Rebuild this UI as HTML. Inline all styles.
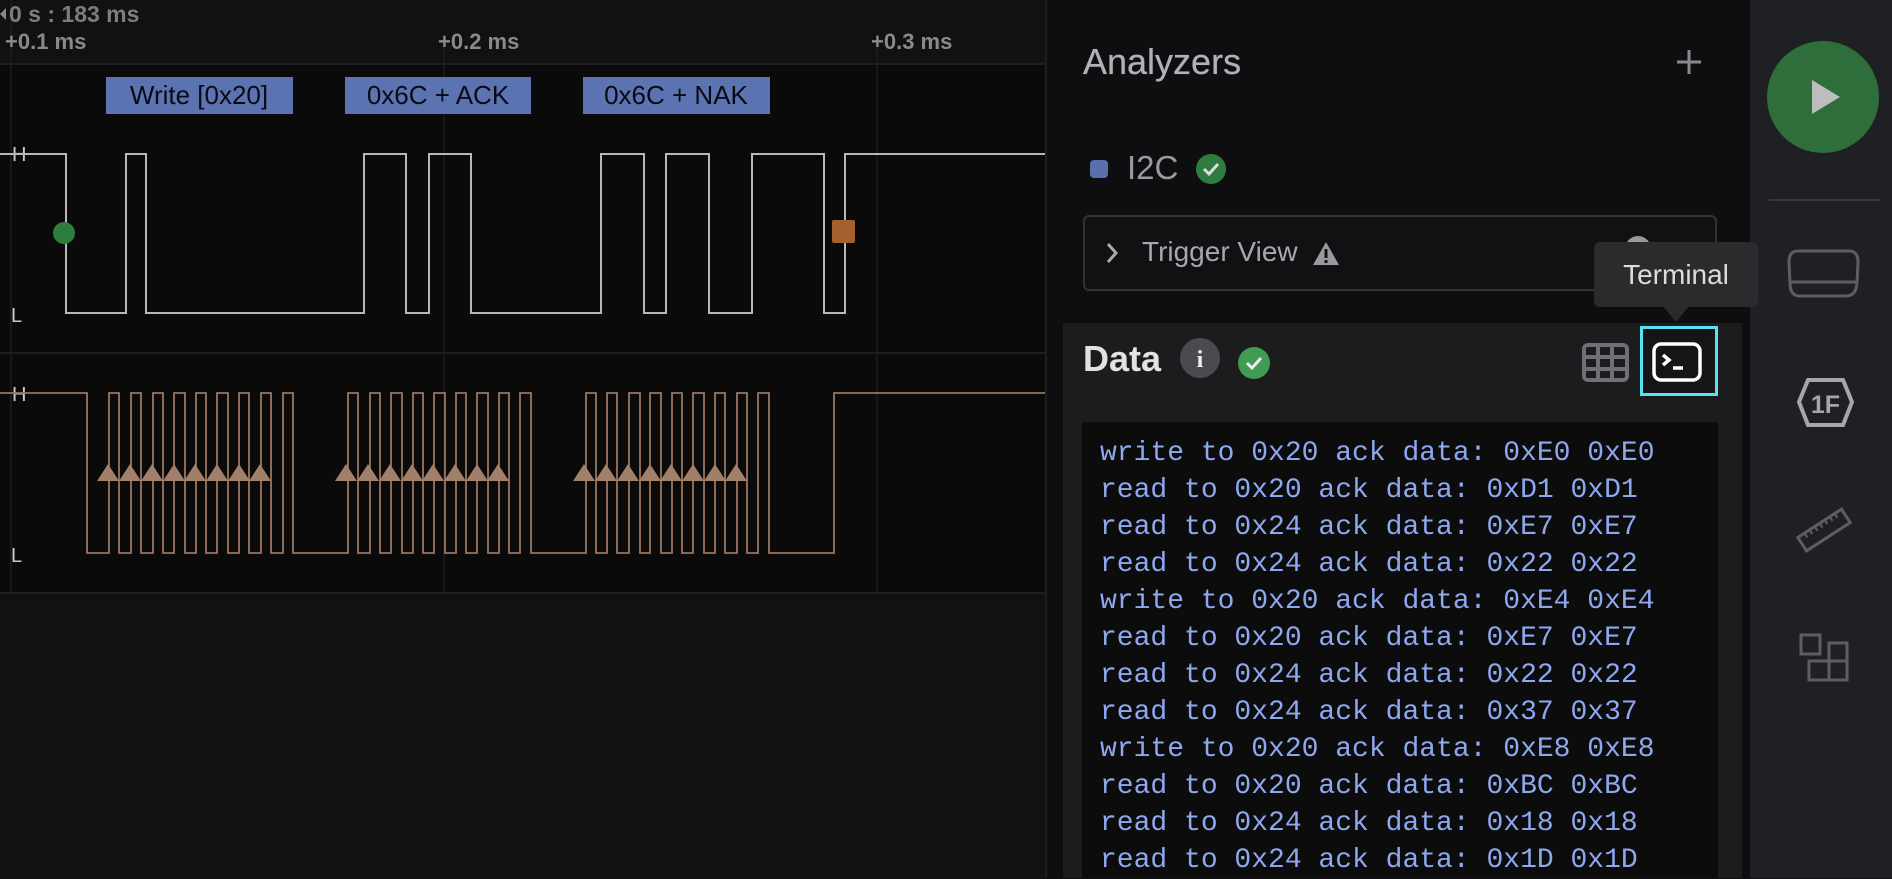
<!DOCTYPE html>
<html><head><meta charset="utf-8"><style>
*{margin:0;padding:0;box-sizing:border-box}
body{width:1892px;height:878px;overflow:hidden;background:#0f0f10;font-family:"Liberation Sans",sans-serif;position:relative}
.abs{position:absolute}
.term div{white-space:pre;height:37px;line-height:37px}
</style></head><body>
<div class="abs" style="left:0;top:0;width:1045px;height:878px;background:#111112"></div>
<div class="abs" style="left:0;top:64px;width:1045px;height:529px;background:#0a0a0a"></div>
<svg class="abs" style="left:0;top:0" width="1045" height="878" viewBox="0 0 1045 878">
 <line x1="11" y1="0" x2="11" y2="593" stroke="#1d1d1f" stroke-width="1.5"/>
 <line x1="444" y1="40" x2="444" y2="593" stroke="#1d1d1f" stroke-width="1.5"/>
 <line x1="877" y1="40" x2="877" y2="593" stroke="#1d1d1f" stroke-width="1.5"/>
 <line x1="0" y1="64" x2="1045" y2="64" stroke="#1e1e20" stroke-width="2"/>
 <line x1="0" y1="353" x2="1045" y2="353" stroke="#1e1e20" stroke-width="2"/>
 <line x1="0" y1="593" x2="1045" y2="593" stroke="#1e1e20" stroke-width="2"/>
 <path d="M0 14 L6 8 L6 20Z" fill="#888"/>
 <text x="9" y="22" font-family="Liberation Sans" font-size="23" font-weight="bold" fill="#7d7d80">0 s : 183 ms</text>
 <text x="5" y="49" font-family="Liberation Sans" font-size="22" font-weight="bold" fill="#8a8a8d">+0.1 ms</text>
 <text x="438" y="49" font-family="Liberation Sans" font-size="22" font-weight="bold" fill="#8a8a8d">+0.2 ms</text>
 <text x="871" y="49" font-family="Liberation Sans" font-size="22" font-weight="bold" fill="#8a8a8d">+0.3 ms</text>
 <rect x="106" y="77" width="187" height="37" fill="#5b73b0"/>
 <rect x="345" y="77" width="186" height="37" fill="#5b73b0"/>
 <rect x="583" y="77" width="187" height="37" fill="#5b73b0"/>
 <text x="199" y="104" text-anchor="middle" font-family="Liberation Sans" font-size="26" fill="#0a0a14">Write [0x20]</text>
 <text x="438" y="104" text-anchor="middle" font-family="Liberation Sans" font-size="26" fill="#0a0a14">0x6C + ACK</text>
 <text x="676" y="104" text-anchor="middle" font-family="Liberation Sans" font-size="26" fill="#0a0a14">0x6C + NAK</text>
 <text x="12" y="161" font-family="Liberation Sans" font-size="20" fill="#ccc">H</text>
 <text x="11" y="322" font-family="Liberation Sans" font-size="20" fill="#ccc">L</text>
 <text x="12" y="401" font-family="Liberation Sans" font-size="20" fill="#ccc">H</text>
 <text x="11" y="562" font-family="Liberation Sans" font-size="20" fill="#ccc">L</text>
 <path d="M0 154 H66 V313 H126 V154 H146 V313 H364 V154 H406 V313 H429 V154 H471 V313 H601 V154 H644 V313 H666 V154 H709 V313 H752 V154 H824 V313 H845 V154 H1045" fill="none" stroke="#b8b8b8" stroke-width="2"/>
 <circle cx="64" cy="233" r="11" fill="#2e7d3e"/>
 <rect x="832" y="220" width="23" height="23" rx="2" fill="#a6602f"/>
 <path d="M0 393 H87 V553 H109 V393 H119 V553 H131 V393 H141 V553 H153 V393 H163 V553 H174 V393 H185 V553 H196 V393 H206 V553 H217 V393 H228 V553 H239 V393 H249 V553 H261 V393 H271 V553 H283 V393 H293 V553 H348 V393 H358 V553 H370 V393 H380 V553 H391 V393 H402 V553 H413 V393 H423 V553 H434 V393 H445 V553 H456 V393 H466 V553 H477 V393 H488 V553 H499 V393 H509 V553 H520 V393 H531 V553 H586 V393 H596 V553 H607 V393 H617 V553 H629 V393 H640 V553 H650 V393 H661 V553 H672 V393 H682 V553 H693 V393 H704 V553 H715 V393 H725 V553 H737 V393 H747 V553 H758 V393 H769 V553 H834 V393 H1045" fill="none" stroke="#9a7660" stroke-width="1.8"/>
 <g fill="#a17f68">
  <path d="M97 481 l11 -17 l11 17Z M119 481 l11 -17 l11 17Z M141 481 l11 -17 l11 17Z M163 481 l11 -17 l11 17Z M184 481 l11 -17 l11 17Z M206 481 l11 -17 l11 17Z M228 481 l11 -17 l11 17Z M249 481 l11 -17 l11 17Z"/>
  <path d="M335 481 l11 -17 l11 17Z M357 481 l11 -17 l11 17Z M379 481 l11 -17 l11 17Z M401 481 l11 -17 l11 17Z M422 481 l11 -17 l11 17Z M444 481 l11 -17 l11 17Z M466 481 l11 -17 l11 17Z M487 481 l11 -17 l11 17Z"/>
  <path d="M573 481 l11 -17 l11 17Z M595 481 l11 -17 l11 17Z M617 481 l11 -17 l11 17Z M639 481 l11 -17 l11 17Z M660 481 l11 -17 l11 17Z M682 481 l11 -17 l11 17Z M704 481 l11 -17 l11 17Z M725 481 l11 -17 l11 17Z"/>
 </g>
</svg>
<div class="abs" style="left:1045px;top:0;width:2px;height:878px;background:#1e1e20"></div>
<div class="abs" style="left:1047px;top:0;width:703px;height:878px;background:#0e0e10"></div>
<div class="abs" style="left:1083px;top:41px;font-size:36px;color:#b2b2b6;text-shadow:0 0 0.6px #b2b2b6">Analyzers</div>
<svg class="abs" style="left:1675px;top:48px" width="28" height="28"><path d="M14 2V26M2 14H26" stroke="#8a8a8e" stroke-width="3"/></svg>
<div class="abs" style="left:1090px;top:160px;width:18px;height:18px;border-radius:4px;background:#5a6fae"></div>
<div class="abs" style="left:1127px;top:149px;font-size:33px;color:#9a9a9e">I2C</div>
<svg class="abs" style="left:1195px;top:153px" width="32" height="32"><circle cx="16" cy="16" r="15" fill="#2e7d3e"/><path d="M9 16 l5 5 l9 -10" fill="none" stroke="#ddd" stroke-width="3"/></svg>
<div class="abs" style="left:1083px;top:215px;width:634px;height:76px;border:2px solid #333336;border-radius:6px;background:#111113"></div>
<svg class="abs" style="left:1104px;top:241px" width="16" height="24"><path d="M4 3l8 9l-8 9" fill="none" stroke="#aaa" stroke-width="3"/></svg>
<div class="abs" style="left:1142px;top:236px;font-size:28px;color:#a8a8ac">Trigger View</div>
<svg class="abs" style="left:1312px;top:241px" width="28" height="25"><path d="M14 1L27 24H1Z" fill="#9a9a9e"/><path d="M14 8v9M14 19v3" stroke="#111" stroke-width="3"/></svg>
<div class="abs" style="left:1625px;top:236px;width:26px;height:26px;border-radius:50%;background:#999"></div>
<div class="abs" style="left:1063px;top:323px;width:679px;height:555px;background:#1c1c1e"></div>
<div class="abs" style="left:1083px;top:338px;font-size:36px;font-weight:bold;color:#e2e2e4">Data</div>
<svg class="abs" style="left:1179px;top:337px" width="42" height="42"><circle cx="21" cy="21" r="20" fill="#4a4a50"/><text x="21" y="30" text-anchor="middle" font-family="Liberation Serif" font-weight="bold" font-size="24" fill="#eee">i</text></svg>
<svg class="abs" style="left:1237px;top:346px" width="34" height="34"><circle cx="17" cy="17" r="16" fill="#3f9c52"/><path d="M10 17 l5 5 l9 -10" fill="none" stroke="#eee" stroke-width="3"/></svg>
<svg class="abs" style="left:1582px;top:343px" width="48" height="40"><rect x="2" y="2" width="43" height="35" rx="4" fill="none" stroke="#707074" stroke-width="4"/><path d="M16 2V37M30 2V37M2 14H45M2 26H45" stroke="#707074" stroke-width="4"/></svg>
<div class="abs" style="left:1640px;top:326px;width:78px;height:70px;border:3px solid #5ce1f0;background:#151517"></div>
<svg class="abs" style="left:1652px;top:342px" width="50" height="40"><rect x="2" y="2" width="46" height="36" rx="7" fill="none" stroke="#fff" stroke-width="3.5"/><path d="M11 13l6 5l-6 5M21 26H31" fill="none" stroke="#fff" stroke-width="3.5"/></svg>
<div class="abs term" style="left:1082px;top:422px;width:636px;height:456px;background:#0c0c0d;padding:13px 0 0 18px;font-family:'Liberation Mono',monospace;font-size:28px;color:#8ea8f0">
<div>write to 0x20 ack data: 0xE0 0xE0</div><div>read to 0x20 ack data: 0xD1 0xD1</div><div>read to 0x24 ack data: 0xE7 0xE7</div><div>read to 0x24 ack data: 0x22 0x22</div><div>write to 0x20 ack data: 0xE4 0xE4</div><div>read to 0x20 ack data: 0xE7 0xE7</div><div>read to 0x24 ack data: 0x22 0x22</div><div>read to 0x24 ack data: 0x37 0x37</div><div>write to 0x20 ack data: 0xE8 0xE8</div><div>read to 0x20 ack data: 0xBC 0xBC</div><div>read to 0x24 ack data: 0x18 0x18</div><div>read to 0x24 ack data: 0x1D 0x1D</div>
</div>
<div class="abs" style="left:1750px;top:0;width:142px;height:878px;background:#1f2023"></div>
<svg class="abs" style="left:1750px;top:0" width="142" height="878">
 <circle cx="73" cy="97" r="56" fill="#2e6e3b"/>
 <path d="M62 80 L90 97 L62 114Z" fill="#bdbdbd"/>
 <line x1="19" y1="200" x2="130" y2="200" stroke="#3a3a3e" stroke-width="2"/>
 <path d="M48 251 H99 Q108 251 108 262 L107 283 Q106 296 96 296 H50 Q40 296 40 283 L39 262 Q39 251 48 251Z M40 282 H108" fill="none" stroke="#5e5e62" stroke-width="3"/>
 <path d="M58 380 H93 L102 402 L93 425 H58 L49 402Z" fill="none" stroke="#a6a6a6" stroke-width="4"/>
 <text x="75.5" y="413" text-anchor="middle" font-family="Liberation Sans" font-weight="bold" font-size="25" fill="#a6a6a6">1F</text>
 <g transform="translate(74 530) rotate(-33)">
  <rect x="-26" y="-8" width="52" height="16" fill="none" stroke="#5e5e62" stroke-width="3"/>
  <path d="M-18 -8v5M-12 -8v5M-6 -8v5M0 -8v5M6 -8v5M12 -8v5M18 -8v5" stroke="#5e5e62" stroke-width="2"/>
 </g>
 <g fill="none" stroke="#5e5e62" stroke-width="3">
  <rect x="51" y="635" width="19" height="19"/>
  <path d="M79 643 H97 V680 H59 V661 H79Z M79 661V680 M79 661H97"/>
 </g>
</svg>
<div class="abs" style="left:1594px;top:242px;width:164px;height:65px;background:#2b2b2d;border-radius:6px;color:#dcdcdc;font-size:28px;text-align:center;line-height:65px">Terminal</div>
<svg class="abs" style="left:1663px;top:306px" width="26" height="18"><path d="M0 0H26L13 16Z" fill="#2b2b2d"/></svg>
</body></html>
